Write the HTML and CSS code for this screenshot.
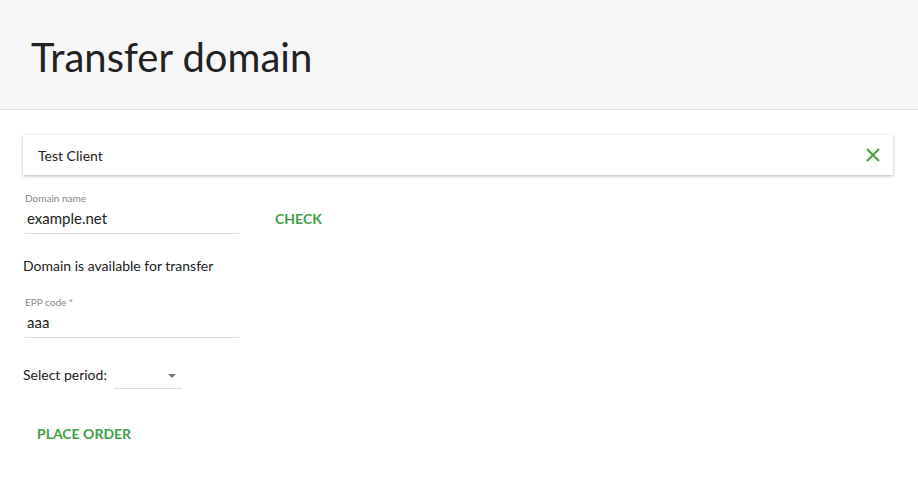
FILE: index.html
```html
<!DOCTYPE html>
<html>
<head>
<meta charset="utf-8">
<link rel="stylesheet" href="styles.css">
</head>
<body>
<header class="page-header">
  <h1 class="title">Transfer domain</h1>
</header>
<main class="content">
  <div class="client-card">
    <span class="client-name">Test Client</span>
    <svg class="close-icon" width="14" height="14" viewBox="0 0 14 14"><path d="M1 1L13 13M13 1L1 13" stroke="#43a047" stroke-width="2" fill="none"/></svg>
  </div>
  <div class="domain-row">
    <div class="field">
      <label class="field-label">Domain name</label>
      <div class="field-value">example.net</div>
    </div>
    <button class="text-btn check-btn">CHECK</button>
  </div>
  <p class="status">Domain is available for transfer</p>
  <div class="field epp">
    <label class="field-label">EPP code *</label>
    <div class="field-value">aaa</div>
  </div>
  <div class="period-row">
    <span class="period-label">Select period:</span>
    <div class="select"><span class="arrow"></span></div>
  </div>
  <button class="text-btn order-btn">PLACE ORDER</button>
</main>
</body>
</html>
```
FILE: styles.css
```css
* { box-sizing: border-box; }
body {
  margin: 0;
  font-family: Lato, "Liberation Sans", sans-serif;
  color: #222;
  background: #fff;
}
.page-header {
  background: #f7f7f7;
  height: 110px;
  border-bottom: 1px solid #dedede;
  padding: 33px 0 0 31px;
}
.title {
  margin: 0;
  font-size: 40px;
  font-weight: 400;
  line-height: 48px;
  color: #222;
}
.content {
  padding: 25px 25px 0 23px;
}
.client-card {
  height: 40px;
  width: 870px;
  display: flex;
  align-items: center;
  justify-content: space-between;
  padding: 0 13px 0 15px;
  background: #fff;
  box-shadow: 0 1px 3px rgba(0,0,0,0.3);
  font-size: 14px;
}
.close-icon { display: block; }
.domain-row {
  display: flex;
  align-items: flex-start;
  margin-top: 17px;
}
.field {
  width: 214px;
  margin-left: 2px;
  border-bottom: 1px solid #ddd;
}
.field-label {
  display: block;
  font-size: 10px;
  color: #888;
  line-height: 12px;
}
.field-value {
  font-size: 15px;
  line-height: 20px;
  padding: 4px 0 5px 2px;
  color: #222;
}
.text-btn {
  background: none;
  border: none;
  font-family: inherit;
  font-weight: 700;
  font-size: 14px;
  color: #43a047;
  padding: 0;
  cursor: pointer;
}
.check-btn { margin: 18px 0 0 36px; }
.status {
  margin: 23px 0 0 0;
  font-size: 14px;
  line-height: 18px;
}
.epp { margin-top: 21px; }
.period-row {
  display: flex;
  align-items: flex-start;
  margin-top: 28px;
}
.period-label {
  font-size: 14px;
  line-height: 18px;
}
.select {
  position: relative;
  width: 68px;
  height: 23px;
  margin-left: 7px;
  border-bottom: 1px solid #ddd;
}
.arrow {
  position: absolute;
  right: 6px;
  top: 8px;
  border-left: 4px solid transparent;
  border-right: 4px solid transparent;
  border-top: 4px solid #777;
}
.order-btn { margin: 36px 0 0 14px; }
```
